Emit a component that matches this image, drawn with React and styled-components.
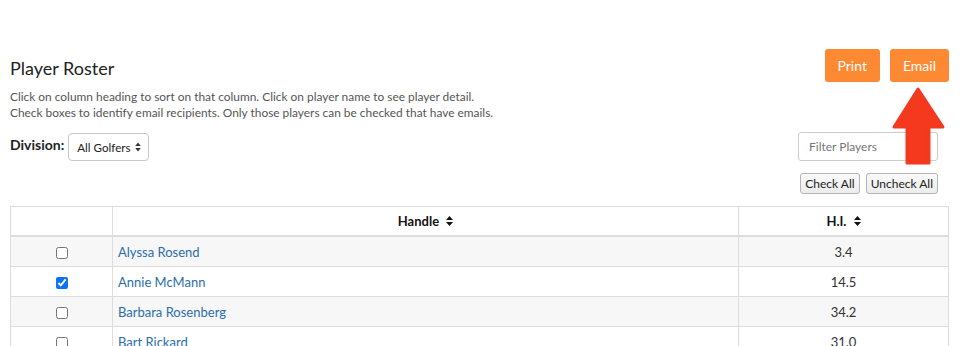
import React from "react";
import styled, {createGlobalStyle} from "styled-components";

const GlobalStyle = createGlobalStyle`
  body {
    margin: 0;
    background: #fff;
    font-family: "Lato", "Liberation Sans", sans-serif;
    color: #333;
  }
`

const players = [
    {name: "Alyssa Rosend", hi: "3.4", checked: false},
    {name: "Annie McMann", hi: "14.5", checked: true},
    {name: "Barbara Rosenberg", hi: "34.2", checked: false},
    {name: "Bart Rickard", hi: "31.0", checked: false},
];

const SortIcon = () => (
    <svg width="7" height="10" viewBox="0 0 7 10">
        <path d="M3.5 0 L7 4 L0 4 Z" fill="#111"/>
        <path d="M3.5 10 L7 6 L0 6 Z" fill="#111"/>
    </svg>
)

const App = () => {
    return (
        <Page>
            <GlobalStyle/>
            <Header>
                <div>
                    <Title>Player Roster</Title>
                    <Desc>Click on column heading to sort on that column. Click on player name to see player detail.</Desc>
                    <Desc>Check boxes to identify email recipients. Only those players can be checked that have emails.</Desc>
                </div>
                <ActionGroup>
                    <OrangeButton>Print</OrangeButton>
                    <OrangeButton>Email</OrangeButton>
                    <Arrow width="54" height="82" viewBox="0 0 54 82">
                        <path d="M26 3 L51 41 L37 41 L37 77 L15 77 L15 41 L2 41 Z"
                              fill="#f4391f" stroke="#f4391f" strokeWidth="3" strokeLinejoin="round"/>
                    </Arrow>
                </ActionGroup>
            </Header>
            <Toolbar>
                <Division>
                    <Label>Division:</Label>
                    <SelectBox>
                        All Golfers
                        <svg width="6" height="10" viewBox="0 0 6 10">
                            <path d="M3 0.5 L5.8 4 L0.2 4 Z" fill="#333"/>
                            <path d="M3 9.5 L5.8 6 L0.2 6 Z" fill="#333"/>
                        </svg>
                    </SelectBox>
                </Division>
                <RightTools>
                    <FilterInput placeholder="Filter Players"/>
                    <SmallButtons>
                        <GrayButton>Check All</GrayButton>
                        <GrayButton>Uncheck All</GrayButton>
                    </SmallButtons>
                </RightTools>
            </Toolbar>
            <Table>
                <colgroup>
                    <col style={{width: "102px"}}/>
                    <col style={{width: "626px"}}/>
                    <col style={{width: "210px"}}/>
                </colgroup>
                <thead>
                <tr>
                    <Th></Th>
                    <Th>Handle <SortIcon/></Th>
                    <Th>H.I. <SortIcon/></Th>
                </tr>
                </thead>
                <tbody>
                {players.map((p, index) => {
                    return (
                        <Row key={index} $striped={index % 2 === 0}>
                            <Td $align="center"><Check type="checkbox" defaultChecked={p.checked}/></Td>
                            <Td><NameLink>{p.name}</NameLink></Td>
                            <Td $align="center">{p.hi}</Td>
                        </Row>
                    )
                })}
                </tbody>
            </Table>
        </Page>
    )
}

const Page = styled.div`
  padding: 49px 13px 0 10px;
  width: 938px;
`

const Header = styled.div`
  display: flex;
  justify-content: space-between;
  align-items: flex-start;
`

const Title = styled.div`
  margin-top: 9px;
  font-size: 18px;
  line-height: 20px;
  color: #222;
  margin-bottom: 11px;
`

const Desc = styled.div`
  font-size: 11.9px;
  line-height: 16px;
  color: #555;
`

const ActionGroup = styled.div`
  position: relative;
  display: flex;
  gap: 10px;
  margin-right: -1px;
`

const OrangeButton = styled.button`
  height: 33px;
  padding: 0 13px;
  background: #fd8a33;
  border: none;
  border-radius: 3px;
  color: #fff;
  font-family: inherit;
  font-size: 14px;
`

const Arrow = styled.svg`
  position: absolute;
  right: 3px;
  top: 37px;
`

const Toolbar = styled.div`
  display: flex;
  justify-content: space-between;
  align-items: flex-start;
  margin-top: 11px;
`

const Division = styled.div`
  display: flex;
  align-items: center;
  gap: 4px;
  margin-top: 1px;
`

const Label = styled.span`
  font-size: 14px;
  font-weight: 700;
  color: #222;
  margin-top: -5px;
`

const SelectBox = styled.div`
  display: flex;
  align-items: center;
  gap: 5px;
  height: 26px;
  padding: 0 7px 0 8px;
  border: 1px solid #c8c8c8;
  border-radius: 4px;
  font-size: 11.6px;
  color: #222;
`

const RightTools = styled.div`
  display: flex;
  flex-direction: column;
  align-items: flex-end;
  margin-right: 10px;
`

const FilterInput = styled.input`
  box-sizing: border-box;
  width: 140px;
  height: 29px;
  padding: 0 10px;
  border: 1px solid #ccc;
  border-radius: 3px;
  font-family: inherit;
  font-size: 12px;
  &::placeholder {
    color: #777;
  }
`

const SmallButtons = styled.div`
  display: flex;
  gap: 6px;
  margin-top: 12px;
`

const GrayButton = styled.button`
  height: 21px;
  padding: 0 4px;
  background: linear-gradient(#fafafa, #ececec);
  border: 1px solid #b5b5b5;
  border-radius: 3px;
  font-family: inherit;
  font-size: 12px;
  color: #222;
`

const Table = styled.table`
  margin-top: 12px;
  width: 938px;
  border-collapse: collapse;
  table-layout: fixed;
  font-size: 13px;
`

const Th = styled.th`
  height: 26px;
  border: 1px solid #ddd;
  border-bottom: 2px solid #ddd;
  font-size: 13px;
  font-weight: 700;
  color: #111;
  text-align: center;
  svg {
    margin-left: 4px;
  }
`

const Row = styled.tr`
  background: ${(props) => (props.$striped ? "#f7f7f7" : "#fff")};
`

const Td = styled.td`
  height: 29px;
  padding: 0 5px;
  border: 1px solid #ddd;
  text-align: ${(props) => props.$align || "left"};
  color: #333;
`

const NameLink = styled.a`
  color: #2b6ea8;
  cursor: pointer;
`

const Check = styled.input`
  margin: 0;
  width: 12px;
  height: 12px;
  accent-color: #0a74f4;
  vertical-align: middle;
`

export default App;
